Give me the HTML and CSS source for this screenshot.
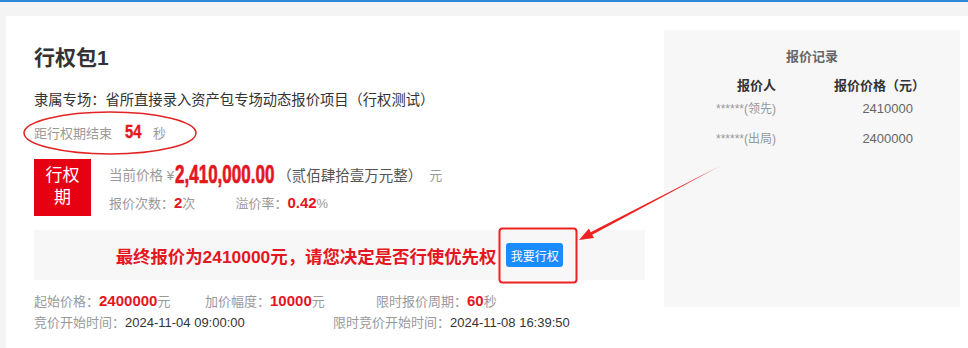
FILE: index.html
```html
<!DOCTYPE html>
<html lang="zh-CN">
<head>
    <meta charset="UTF-8">
    <title>行权包1</title>
    <link rel="stylesheet" href="styles.css">
</head>
<body>
    <div class="page">
        <div class="card">
            <div class="main">
                <h1 class="title">行权包1</h1>
                <p class="session">隶属专场：省所直接录入资产包专场动态报价项目（行权测试）</p>
                <div class="countdown">
                    <span class="label">距行权期结束</span>
                    <span class="sec"><span class="narrow">54</span></span>
                    <span class="label">秒</span>
                </div>

                <div class="status">
                    <div class="stage">行权<br>期</div>
                    <div class="price-info">
                        <div class="price-row">
                            <span class="label big">当前价格 ¥</span>
                            <span class="price"><span class="narrow">2,410,000.00</span></span>
                            <span class="upper">（贰佰肆拾壹万元整）</span>
                            <span class="label unit">元</span>
                        </div>
                        <div class="count-row">
                            <span><span class="label">报价次数：</span><b class="red">2</b><span class="label">次</span></span>
                            <span><span class="label">溢价率：</span><b class="red">0.42</b><span class="label">%</span></span>
                        </div>
                    </div>
                </div>

                <div class="notice">
                    <span class="notice-text">最终报价为2410000元，请您决定是否行使优先权</span>
                    <button class="btn">我要行权</button>
                </div>

                <div class="info-row first">
                    <div class="cell w1"><span class="label">起始价格：</span><b class="red">2400000</b><span class="label">元</span></div>
                    <div class="cell w1"><span class="label">加价幅度：</span><b class="red">10000</b><span class="label">元</span></div>
                    <div class="cell"><span class="label">限时报价周期：</span><b class="red">60</b><span class="label">秒</span></div>
                </div>
                <div class="info-row">
                    <div class="cell w2"><span class="label">竞价开始时间：</span><span class="val">2024-11-04 09:00:00</span></div>
                    <div class="cell"><span class="label">限时竞价开始时间：</span><span class="val">2024-11-08 16:39:50</span></div>
                </div>
            </div>

            <div class="records">
                <h3>报价记录</h3>
                <div class="rec-table">
                    <div class="rec-head">报价人</div>
                    <div class="rec-head price-col">报价价格（元）</div>
                    <div class="rec-name">******(领先)</div>
                    <div class="rec-price">2410000</div>
                    <div class="rec-name">******(出局)</div>
                    <div class="rec-price">2400000</div>
                </div>
            </div>
        </div>
    </div>

    <!-- screenshot annotations -->
    <svg class="marks" width="968" height="348" viewBox="0 0 968 348">
        <ellipse cx="110" cy="133" rx="86" ry="21" fill="none" stroke="#e02424" stroke-width="1.5"/>
        <rect x="499.5" y="228.5" width="77" height="54" rx="3" fill="none" stroke="#ee2222" stroke-width="2"/>
        <polygon points="579,240 594,238 592.2,234.8 720,166 590.6,232.2 589,228.6" fill="#ee2222"/>
    </svg>
</body>
</html>
```

FILE: styles.css
```css
body {
    margin: 0;
    background-color: #f4f4f4;
    font-family: 'Liberation Sans', 'Noto Sans CJK SC', sans-serif;
    color: #333;
    overflow: hidden;
}
.page {
    border-top: 2px solid #2a8ad8;
    padding: 14px 0 0 6px;
}
.card {
    background: white;
    display: flex;
    gap: 19px;
    padding: 14px 8px 0 28px;
    height: 332px;
    box-sizing: border-box;
}
.main {
    width: 611px;
}
.title {
    margin: 12px 0 0;
    font-size: 21px;
    line-height: 32px;
    font-weight: bold;
    color: #333;
}
.session {
    margin: 14px 0 0;
    font-size: 14.3px;
    line-height: 24px;
    color: #333;
}
.label {
    color: #999;
    font-size: 13px;
}
.label.big {
    font-size: 13.5px;
}
.red {
    color: #e4161f;
    font-size: 15px;
    font-weight: bold;
}
.narrow {
    display: inline-block;
    transform-origin: left center;
    white-space: nowrap;
}
.countdown {
    margin-top: 8px;
    height: 24px;
    display: flex;
    align-items: center;
}
.sec {
    display: inline-block;
    width: 17px;
    color: #e4161f;
    font-weight: bold;
    font-size: 18px;
    margin: 0 11px 0 13px;
    -webkit-text-stroke: 0.4px #e4161f;
}
.sec .narrow {
    transform: scaleX(0.82);
}
.status {
    margin-top: 15px;
    display: flex;
}
.stage {
    width: 57px;
    height: 57px;
    background-color: #e60012;
    color: white;
    font-size: 17px;
    line-height: 22px;
    text-align: center;
    padding-top: 6px;
    box-sizing: border-box;
}
.price-info {
    margin-left: 18px;
}
.price-row {
    height: 30px;
    display: flex;
    align-items: center;
}
.price {
    display: inline-block;
    width: 109px;
    color: #e4161f;
    font-weight: bold;
    font-size: 26px;
    line-height: 30px;
    margin-left: 1px;
    -webkit-text-stroke: 0.7px #e4161f;
}
.price .narrow {
    transform: scaleX(0.655);
}
.upper {
    color: #555;
    font-size: 14.5px;
    margin-left: -7px;
}
.unit {
    margin-left: 7px;
}
.count-row {
    display: flex;
    gap: 40px;
    line-height: 24px;
    margin-top: 2px;
}
.notice {
    margin-top: 14px;
    height: 50px;
    background-color: #f7f7f7;
    display: flex;
    align-items: center;
    justify-content: center;
    gap: 10px;
}
.notice-text {
    color: #e4161f;
    font-size: 17.4px;
    font-weight: bold;
}
.btn {
    border: none;
    border-radius: 3px;
    background-color: #1a8cff;
    color: white;
    font-family: inherit;
    font-size: 12px;
    height: 24px;
    width: 57px;
    padding: 0;
}
.info-row {
    display: flex;
    align-items: center;
    height: 21px;
}
.info-row.first {
    margin-top: 10px;
}
.cell.w1 {
    width: 171px;
}
.cell.w2 {
    width: 299px;
}
.val {
    font-size: 13px;
    color: #333;
}
.records {
    width: 296px;
    height: 277px;
    background-color: #f7f7f7;
}
.records h3 {
    margin: 18px 0 0;
    text-align: center;
    font-size: 13px;
    line-height: 18px;
    color: #666;
}
.rec-table {
    display: grid;
    grid-template-columns: 112px 79px;
    column-gap: 58px;
    margin-top: 12px;
}
.rec-head {
    text-align: right;
    font-size: 13px;
    font-weight: bold;
    color: #333;
    line-height: 16px;
    white-space: nowrap;
}
.rec-head.price-col {
    text-align: left;
}
.rec-name {
    text-align: right;
    font-size: 12px;
    color: #999;
    line-height: 30px;
}
.rec-price {
    text-align: right;
    font-size: 13px;
    color: #666;
    line-height: 30px;
}
.marks {
    position: absolute;
    top: 0;
    left: 0;
    pointer-events: none;
}
```
